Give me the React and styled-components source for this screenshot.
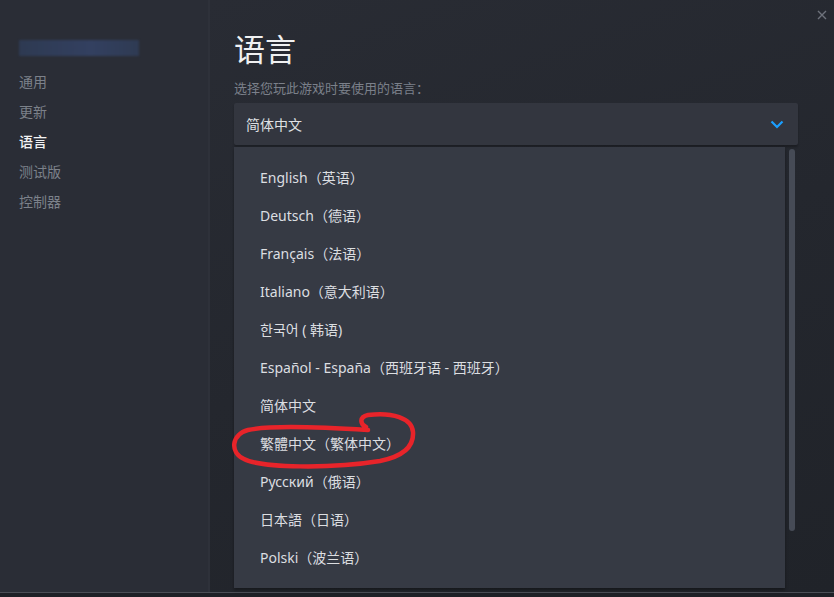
import React from "react";
import styled, { createGlobalStyle } from "styled-components";

const languages = [
  "English（英语）",
  "Deutsch（德语）",
  "Français（法语）",
  "Italiano（意大利语）",
  "한국어 ( 韩语)",
  "Español - España（西班牙语 - 西班牙）",
  "简体中文",
  "繁體中文（繁体中文）",
  "Русский（俄语）",
  "日本語（日语）",
  "Polski（波兰语）",
];

const navItems = ["通用", "更新", "语言", "测试版", "控制器"];

const App = () => {
  return (
    <Page>
      <GlobalStyle />
      <Body>
        <Sidebar>
          <UserName />
          <Nav>
            {navItems.map((item) => (
              <NavItem key={item} active={item === "语言"}>
                {item}
              </NavItem>
            ))}
          </Nav>
        </Sidebar>
        <Main>
          <CloseButton>
            <svg width="10" height="10" viewBox="0 0 10 10">
              <path d="M1 1L9 9M9 1L1 9" stroke="#6e727b" strokeWidth="1.4" />
            </svg>
          </CloseButton>
          <Title>语言</Title>
          <Subtitle>选择您玩此游戏时要使用的语言：</Subtitle>
          <Select>
            <span>简体中文</span>
            <svg width="14" height="9" viewBox="0 0 14 9">
              <path
                d="M1.5 1.5L7 7L12.5 1.5"
                stroke="#1a9fff"
                strokeWidth="2.2"
                fill="none"
              />
            </svg>
          </Select>
          <ListWrap>
            <List>
              {languages.map((lang) => (
                <Option key={lang}>{lang}</Option>
              ))}
            </List>
            <ScrollTrack>
              <ScrollThumb />
            </ScrollTrack>
          </ListWrap>
        </Main>
        <Annotation width="834" height="592" viewBox="0 0 834 592">
          <path
            d="M368,430 C320,427 270,425 248,430 C232,434 229,452 244,459 C262,468 330,469 380,461 C405,456 414,446 413,432 C412,418 392,412 368,415 C359,417 360,424 366,427"
            stroke="#e8242a"
            strokeWidth="4.5"
            fill="none"
            strokeLinecap="round"
          />
        </Annotation>
      </Body>
      <Footer />
    </Page>
  );
};

const GlobalStyle = createGlobalStyle`
  html, body {
    margin: 0;
    padding: 0;
    background: #23262d;
  }
  body {
    font-family: "Noto Sans", "Noto Sans CJK SC", sans-serif;
  }
`;

const Page = styled.div`
  width: 834px;
  height: 597px;
  display: flex;
  flex-direction: column;
  overflow: hidden;
`;

const Body = styled.div`
  position: relative;
  display: flex;
  height: 592px;
`;

const Sidebar = styled.div`
  width: 210px;
  flex-shrink: 0;
  background: #2a2d36;
  box-shadow: inset -2px 0 0 #2e313a;
  padding: 40px 0 0 19px;
  box-sizing: border-box;
`;

const UserName = styled.div`
  width: 120px;
  height: 16px;
  margin-bottom: 10px;
  background: linear-gradient(90deg, #2e3a52, #334060 60%, #2f3b53);
  filter: blur(1px);
`;

const Nav = styled.div`
  display: flex;
  flex-direction: column;
`;

const NavItem = styled.div`
  height: 30px;
  line-height: 30px;
  font-size: 14px;
  font-family: "Noto Sans CJK SC", sans-serif;
  color: ${(props) => (props.active ? "#f2f3f4" : "#7c818a")};
  font-weight: ${(props) => (props.active ? 500 : 400)};
`;

const Main = styled.div`
  position: relative;
  flex: 1;
  padding: 24px 36px 0 24px;
  background: linear-gradient(160deg, #292c34 0%, #24272e 50%, #202329 100%);
  display: flex;
  flex-direction: column;
`;

const CloseButton = styled.div`
  position: absolute;
  top: 3px;
  right: 7px;
`;

const Title = styled.h1`
  margin: 0;
  font-family: "Noto Sans CJK SC", sans-serif;
  font-weight: 400;
  font-size: 31px;
  line-height: 48px;
  color: #f0f1f2;
`;

const Subtitle = styled.div`
  margin-top: 7px;
  font-family: "Noto Sans CJK SC", sans-serif;
  font-size: 13px;
  line-height: 18px;
  color: #7b808a;
`;

const Select = styled.div`
  margin-top: 6px;
  height: 42px;
  background: #33363f;
  border-radius: 2px;
  display: flex;
  align-items: center;
  justify-content: space-between;
  padding: 0 14px 0 12px;
  font-family: "Noto Sans CJK SC", sans-serif;
  font-size: 14px;
  color: #dfe1e3;
  box-shadow: 0 2px 2px rgba(0, 0, 0, 0.25);
`;

const ListWrap = styled.div`
  display: flex;
  margin-top: 2px;
`;

const List = styled.div`
  width: 551px;
  padding: 12px 0 11px 26px;
  box-sizing: border-box;
  background: #363a44;
  box-shadow: 0 2px 3px rgba(0, 0, 0, 0.35);
  display: flex;
  flex-direction: column;
`;

const Option = styled.div`
  height: 38px;
  line-height: 38px;
  font-size: 14px;
  color: #dcdee1;
  font-family: "Noto Sans", "Noto Sans CJK SC", sans-serif;
`;

const ScrollTrack = styled.div`
  width: 6px;
  margin-left: 4px;
  padding-top: 2px;
`;

const ScrollThumb = styled.div`
  width: 6px;
  height: 382px;
  border-radius: 3px;
  background: #464b56;
`;

const Annotation = styled.svg`
  position: absolute;
  left: 0;
  top: 0;
  pointer-events: none;
`;

const Footer = styled.div`
  height: 5px;
  border-top: 1px solid #4b4e56;
  background: #1e2026;
  box-sizing: border-box;
`;

export default App;
